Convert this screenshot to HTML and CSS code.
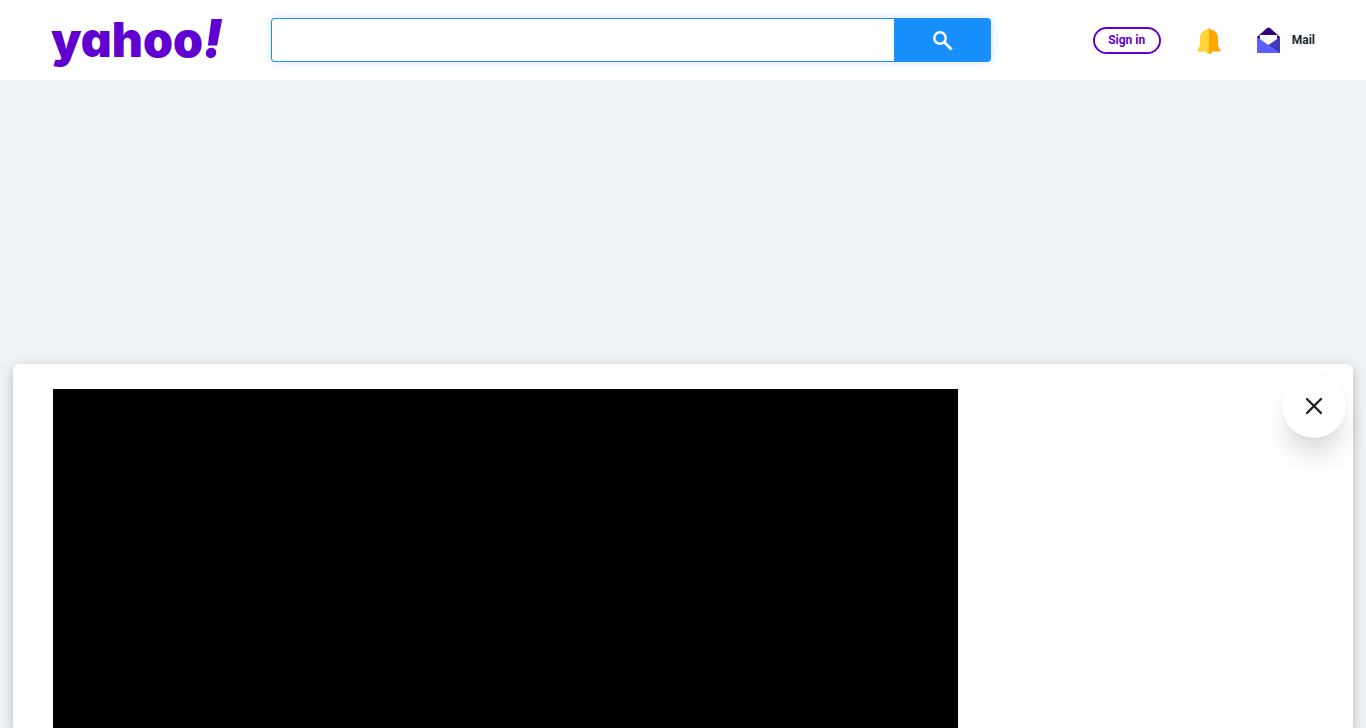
FILE: index.html
```
<!DOCTYPE html>
<html lang="en">
<head>
    <meta charset="UTF-8">
    <meta name="viewport" content="width=device-width, initial-scale=1.0">
    <title>Yahoo</title>
    <link rel="stylesheet" href="styles.css">
</head>
<body>

    <header class="header">
        <a href="#" class="logo">yahoo<span class="logo-mark">!</span></a>

        <form class="search">
            <input type="text" class="search-input" aria-label="Search query">
            <button type="submit" class="search-button" aria-label="Search">
                <svg width="20" height="20" viewBox="0 0 20 20" fill="none" stroke="#fff">
                    <circle cx="7" cy="7" r="5.7" stroke-width="2.4"/>
                    <path d="M11 11l7.6 7.6" stroke-width="2.8"/>
                </svg>
            </button>
        </form>

        <nav class="tools">
            <a href="#" class="sign-in">Sign in</a>
            <button type="button" class="bell" aria-label="Notifications">
                <svg width="24" height="28" viewBox="0 0 24 28">
                    <path d="M9 24h6a3 3 0 0 1-6 0z" fill="#ffc933"/>
                    <path d="M12 24h3a3 3 0 0 1-3 3z" fill="#ffa700"/>
                    <path d="M12 1a1.500 1.500 0 0 0-1.500 1.500C5 3.500 3 7 3 11v5c0 3.500-.8 5-2.500 7-.6.6-.4 1.500.6 1.500H12z" fill="#ffd333"/>
                    <path d="M12 1a1.500 1.500 0 0 1 1.500 1.500C19 3.500 21 7 21 11v5c0 3.500.8 5 2.500 7 .6.6.4 1.500-.6 1.500H12z" fill="#ffa700"/>
                </svg>
            </button>
            <a href="#" class="mail">
                <svg width="23" height="26" viewBox="0 0 24 26" preserveAspectRatio="none">
                    <path d="M0 10l10.500-9q1.500-1 3 0l10.500 9v7H0z" fill="#39007d"/>
                    <path d="M3 8h18v8L12 20l-9-4z" fill="#fff"/>
                    <path d="M5 10h7M5 12h7" stroke="#e0e4e9"/>
                    <path d="M24 10v16H0l12-8z" fill="#4138bd"/>
                    <path d="M0 10l24 16H1a1 1 0 0 1-1-1z" fill="#5d5eff"/>
                </svg>
                <span>Mail</span>
            </a>
        </nav>
    </header>

    <main class="viewer">
        <div class="video"></div>
        <button type="button" class="close" aria-label="Close">
            <svg width="18" height="18" viewBox="0 0 18 18" fill="none" stroke="#1d2228" stroke-width="2.4" stroke-linecap="round">
                <path d="M2 2l14 14M16 2L2 16"/>
            </svg>
        </button>
    </main>

</body>
</html>
```
FILE: styles.css
```
* {
    box-sizing: border-box;
}

body {
    display: flex;
    flex-direction: column;
    min-height: 100vh;
    margin: 0;
    font-family: Roboto, sans-serif;
    background-color: #eff3f6;
}

a {
    text-decoration: none;
}

button {
    padding: 0;
    border: 0;
    background: none;
    cursor: pointer;
}

svg {
    display: block;
}

/* Header */
.header {
    display: flex;
    align-items: center;
    height: 80px;
    padding: 0 51px;
    background-color: #fff;
}

.logo {
    width: 220px;
    padding-bottom: 2px;
    font-family: Inter, sans-serif;
    font-size: 48px;
    font-weight: 900;
    font-feature-settings: "cv11";
    line-height: 48px;
    color: #6001d2;
}

.logo-mark {
    font-size: 52px;
    font-style: italic;
}

.search {
    display: flex;
    flex: 0 1 720px;
    height: 44px;
    border-radius: 4px;
    box-shadow: 0 0 8px rgba(24, 100, 255, 0.2);
}

.search-input {
    flex: 1;
    min-width: 0;
    padding: 0 12px;
    border: 1px solid #188fff;
    border-right: 0;
    border-radius: 4px 0 0 4px;
    font-size: 16px;
    outline: none;
}

.search-button {
    display: flex;
    align-items: center;
    justify-content: center;
    width: 97px;
    padding-top: 2px;
    border-radius: 0 4px 4px 0;
    background-color: #188fff;
}

.tools {
    display: flex;
    align-items: center;
    gap: 36px;
    margin-left: auto;
    font-size: 12px;
    font-weight: 700;
}

.sign-in {
    width: 68px;
    border: 2px solid #6001d2;
    border-radius: 14px;
    line-height: 23px;
    text-align: center;
    color: #6001d2;
}

.bell {
    padding-top: 2px;
}

.mail {
    display: flex;
    align-items: center;
    gap: 12px;
    color: #232a31;
}

/* Video viewer */
.viewer {
    display: flex;
    flex: 1;
    justify-content: space-between;
    align-items: flex-start;
    margin: 284px 13px 0;
    padding: 10px 7px 0 40px;
    border-radius: 6px 6px 0 0;
    background-color: #fff;
    box-shadow: 0 4px 12px rgba(0, 0, 0, 0.25);
}

.video {
    align-self: stretch;
    width: 70%;
    margin-top: 15px;
    background-color: #000;
}

.close {
    display: flex;
    align-items: center;
    justify-content: center;
    width: 64px;
    height: 64px;
    border-radius: 50%;
    background-color: #fff;
    box-shadow: 0 20px 30px -8px rgba(0, 0, 0, 0.2), 0 0 4px rgba(0, 0, 0, 0.05);
}
```
